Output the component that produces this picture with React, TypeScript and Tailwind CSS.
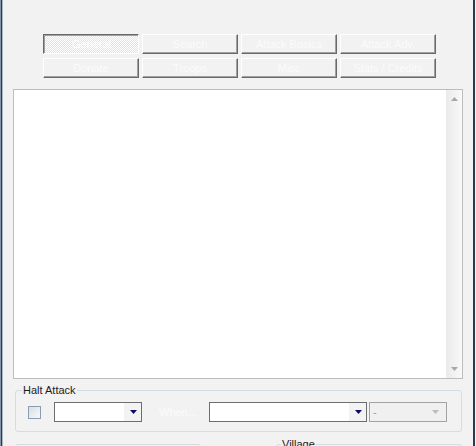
import React from 'react'

const TABS = ['General', 'Search', 'Attack Basics', 'Attack Adv.', 'Donate', 'Troops', 'Misc', 'Stats / Credits']

const TabButton = ({ label, pressed }: { label: string; pressed?: boolean }) => {
  if (pressed) {
    return (
      <div className="h-[20px] flex items-center justify-center pt-px pl-px border border-t-[#696969] border-l-[#696969] border-r-white border-b-white shadow-[inset_1px_1px_#a0a0a0] bg-[repeating-conic-gradient(#ffffff_0%_25%,#e2e2e2_0%_50%)] bg-[length:2px_2px] text-white">
        {label}
      </div>
    )
  }
  return (
    <div className="h-[20px] flex items-center justify-center border border-t-white border-l-white border-r-[#696969] border-b-[#696969] shadow-[inset_-1px_-1px_#a0a0a0] bg-[#f2f2f2] text-[#fbfbfb]">
      {label}
    </div>
  )
}

const Arrow = ({ color }: { color: string }) => (
  <svg width="7" height="4" viewBox="0 0 7 4">
    <polygon points="0,0 7,0 3.5,4" fill={color} />
  </svg>
)

const Combo = ({ width }: { width: string }) => (
  <div className={`${width} h-[20px] border border-[#6e6e6e] bg-white flex justify-end`}>
    <div className="w-[17px] h-full bg-[#f3f3f3] flex items-center justify-center pl-px">
      <Arrow color="#0b0b63" />
    </div>
  </div>
)

const App = () => {
  return (
    <div className="w-[476px] h-[446px] overflow-hidden bg-[#f2f2f2] flex font-['Liberation_Sans',Arial,sans-serif] text-[11px] leading-none">
      <div className="w-px bg-[#8797a8]" />
      <div className="w-px bg-[#2c3b4c]" />
      <div className="w-px bg-[#aab6c2]" />

      <div className="w-[470px] flex flex-col pt-[34px]">
        <div className="shrink-0 ml-[40px] grid grid-cols-[repeat(4,96px)] gap-x-[3px] gap-y-[4px]">
          {TABS.map((t, i) => (
            <TabButton key={t} label={t} pressed={i === 0} />
          ))}
        </div>

        <div className="shrink-0 mt-[11px] ml-[10px] w-[450px] h-[290px] border border-[#bdbdbd] bg-white flex justify-end">
          <div className="w-[16px] h-full flex flex-col justify-between items-center bg-[linear-gradient(to_right,#eaeaea,#f9f9f9)] py-[7px]">
            <svg width="7" height="4" viewBox="0 0 7 4">
              <polygon points="0,4 7,4 3.5,0" fill="#a8a8a8" />
            </svg>
            <Arrow color="#a8a8a8" />
          </div>
        </div>

        <div className="shrink-0 relative mt-[11px] ml-[12px] w-[447px] h-[42px] border border-[#d3dde4] rounded-[3px]">
          <span className="absolute -top-[7px] left-[6px] px-px bg-[#f2f2f2] text-[#1b1b1b] leading-[13px]">Halt Attack</span>
          <div className="flex items-center h-[20px] mt-[11px]">
            <div className="ml-[12px] w-[13px] h-[13px] border border-[#8d9db0] bg-[linear-gradient(135deg,#d9dee6,#f7f8fa)]" />
            <div className="ml-[13px]">
              <Combo width="w-[88px]" />
            </div>
            <span className="ml-[17px] w-[50px] text-[#fbfbfb]">When...</span>
            <Combo width="w-[158px]" />
            <div className="ml-[2px] w-[78px] h-[20px] border border-[#a2a2a2] bg-[#f0f0f0] flex items-center justify-between pl-[3px] pr-[7px] text-[#9c9c9c]">
              <span>-</span>
              <Arrow color="#bcbcbc" />
            </div>
          </div>
        </div>

        <div className="shrink-0 mt-[12px] flex">
          <div className="ml-[12px] w-[186px] h-[20px] border border-[#d3dde4] rounded-[3px]" />
          <div className="relative ml-[75px] w-[186px] h-[20px] border border-[#d3dde4] rounded-[3px]">
            <span className="absolute -top-[7px] left-[4px] px-px bg-[#f2f2f2] text-[#1b1b1b] leading-[13px]">Village</span>
          </div>
        </div>
      </div>

      <div className="w-[2px] bg-[#2c3b4c]" />
      <div className="w-px bg-[#f2f2f2]" />
    </div>
  )
}

export default App
